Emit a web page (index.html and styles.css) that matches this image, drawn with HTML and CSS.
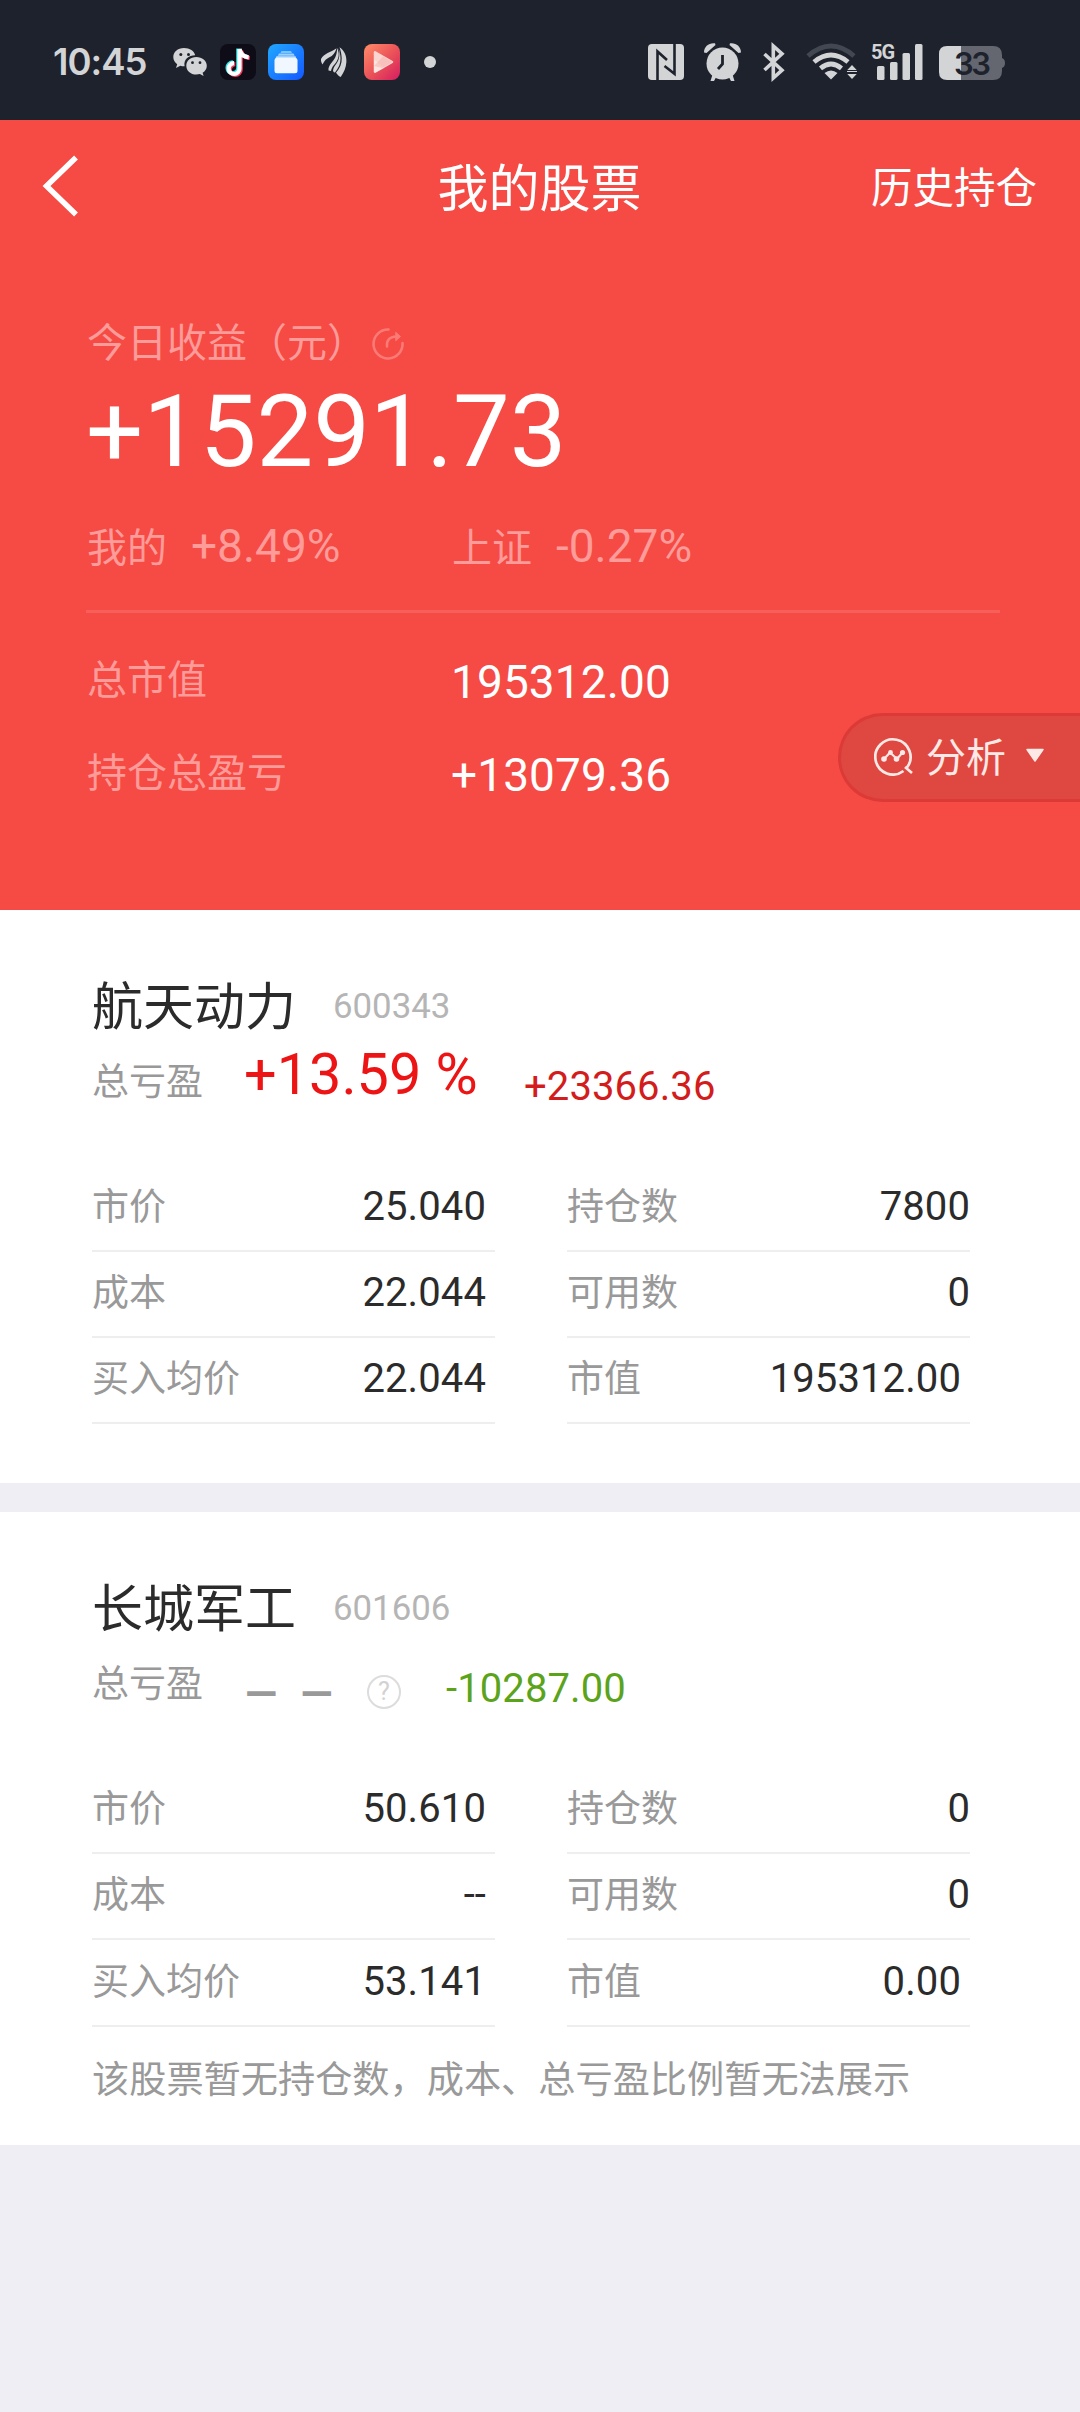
FILE: index.html
```html
<!DOCTYPE html>
<html lang="zh-CN">
<head>
<meta charset="utf-8">
<title>我的股票</title>
<link rel="stylesheet" href="styles.css">
</head>
<body>
<div class="status">
  <span class="clock">10:45</span>
  <div class="status-left">
    <svg class="wechat" width="36" height="36" viewBox="0 0 36 36"><g fill="#d3d4d6"><path d="M12 4C5.500 4 1.300 8 1.300 13.100c0 3 1.500 5.400 3.900 7.100L4 24l4.400-2.200c1.400.4 2.700.6 4.200.5C11.300 15.500 16.500 11.300 23.200 11.300 22.200 7 17.800 4 12 4z"/><path d="M24.300 13c-5.800 0-10 3.700-10 8.700s4.200 8.800 10 8.800c1.300 0 2.500-.2 3.600-.5L31.600 32l-1-3.200c2.600-1.600 4.200-4 4.200-7.100 0-5-4.700-8.700-10.500-8.700z"/></g><g fill="#1e222d"><circle cx="8.800" cy="10.500" r="1.500"/><circle cx="16.500" cy="10.500" r="1.500"/><circle cx="20.500" cy="18.700" r="1.400"/><circle cx="28" cy="18.700" r="1.400"/></g></svg>
    <svg width="36" height="36" viewBox="0 0 36 36"><rect width="36" height="36" rx="8" fill="#0d0c17"/><g fill="none" stroke-width="4.200"><path stroke="#25e6e4" d="M18.300 4.500v19.200a5.400 5.400 0 1 1-5.400-5.300M18.300 5c.8 4.800 4.300 7.300 8.800 7.700"/><path stroke="#f8385c" d="M20.700 6.500v19a5.400 5.400 0 1 1-5.400-5.300M21 6.600c1 4.600 4.300 7 8.800 7.400"/><path stroke="#fff" d="M19.500 5v19.500a5.400 5.400 0 1 1-5.400-5.300M19.500 5c1 5.300 4.600 7.900 9.200 8.300"/></g></svg>
    <svg width="36" height="36" viewBox="0 0 36 36"><defs><linearGradient id="bl" x1="0" y1="0" x2="1" y2="1"><stop stop-color="#20a8ff"/><stop offset="1" stop-color="#1458ff"/></linearGradient></defs><rect width="36" height="36" rx="8" fill="url(#bl)"/><path fill="#7cc3ff" d="M13.500 7h9.500l1 2H12.500z"/><path fill="#9dd1ff" d="M11 9.600h14.500l1.200 2.200H9.700z"/><path fill="#c2e2ff" d="M8.500 12.300h19l1.200 3H7z"/><rect x="6.500" y="14" width="23" height="15.200" rx="2.500" fill="#f1f7ff"/></svg>
    <svg width="36" height="36" viewBox="0 0 36 36"><g fill="#d3d4d6"><path d="M5 15C8 9 14.500 8.500 20.500 4.200c-1 4.300-3.500 7.600-7.500 9.300-3 1.300-4.500 3.400-6.500 6.900C5.300 18.700 4.800 17 5 15z"/><path d="M12.500 26.500c-.5-2.500 1-5.500 3.600-8.500 3.500-4 5-8 4.900-14 2.500 4.500 2.200 9.500-.5 13.700-2.300 3.600-4.300 4.300-5.500 9.300z"/><path d="M23.500 3.300C28.300 6.500 30.800 12 30.400 18c-.4 5.500-2.200 10-5.700 15-2.200-.8-3.200-2.800-4.700-4.300 4-4.700 6-9.200 5.700-14.700-.2-4-1-7.500-2.200-10.700z"/><path d="M22.300 4c1.700 5.500 1.500 11-1.800 15.500-1.700 2.300-3.500 4.500-3.500 7.500.6 1 1.300 1.500 2 1.500 3.700-4.500 5.600-9 5.500-14-.1-4-.9-7.500-2.200-10.500z"/></g></svg>
    <svg width="36" height="36" viewBox="0 0 36 36"><defs><linearGradient id="rd" x1="0" y1="0" x2="1" y2="1"><stop stop-color="#ff8d68"/><stop offset=".55" stop-color="#e94f58"/><stop offset="1" stop-color="#d51c61"/></linearGradient></defs><rect width="36" height="36" rx="8" fill="url(#rd)"/><path d="M11 8.300 28 18 11 27.700z" fill="#fbd6d0" stroke="#fbd6d0" stroke-width="2.500" stroke-linejoin="round"/><path d="M10 15.500 20 24 11 28.800l-1-1z" fill="#fff" opacity=".35"/><path d="M10 22 19 12.500l9.500 5.500L18 24z" fill="#f5a29d" opacity=".4"/></svg>
    <svg class="dot" width="12" height="12"><circle cx="6" cy="6" r="6" fill="#d3d4d6"/></svg>
  </div>
  <svg class="status-right" width="360" height="60" viewBox="646 32 360 60">
    <rect x="648" y="44" width="36" height="36" rx="4" fill="#d3d4d6"/><path d="M657.500 80V51.500L667 60M674.500 44v29.800L664.500 66" fill="none" stroke="#1e222d" stroke-width="2.600"/>
    <g fill="#d3d4d6"><circle cx="722.500" cy="63.500" r="16"/><path d="M704 52.500c0-6 5-10 11-9.200l.5 1.700-9 8zM741 52.500c0-6-5-10-11-9.200l-.5 1.700 9 8z"/><path d="m713 73 4 2.500-3 5.500h-3.500zM732 73l-4 2.500 3 5.500h3.500z"/></g><path d="M722.500 55v9l-4.500 5" fill="none" stroke="#1e222d" stroke-width="2.800"/>
    <path d="m764.500 54 17.500 16.200-8.700 7.800V46l8.700 7.800L764.500 70" fill="none" stroke="#d3d4d6" stroke-width="3.600"/>
    <g fill="none" stroke="#d3d4d6" stroke-width="4.800"><path d="M808 56q23-20 46 0" stroke="#434751"/><path d="M814 62q17-14 34 0M820.500 68.300q10.500-8.500 21 0"/></g><path fill="#d3d4d6" d="M831 79.500 824.500 73q6.500-5 13 0zM847.300 70l4.700-5 4.700 5zM847.300 74l4.700 5 4.700-5z"/><path d="M847 71.500h10" stroke="#d3d4d6" stroke-width="1"/>
    <g fill="#d3d4d6"><rect x="877" y="66" width="7.500" height="14" rx="1.500"/><rect x="890" y="62" width="7.500" height="18" rx="1.500"/><rect x="902.500" y="53" width="7.500" height="27" rx="1.500"/><rect x="915" y="44" width="7.500" height="36" rx="1.500"/><text class="net" x="871" y="58.500">5G</text></g>
    <path d="M961 46h32q9 0 9 9v3q3 1 3 5t-3 5v3q0 9-9 9h-32z" fill="#646770"/><path d="M961 46h-14q-8 0-8 8v18q0 8 8 8h14z" fill="#d3d4d6"/><text class="batt" x="954" y="74.500">33</text>
  </svg>
</div>

<header class="hero">
  <nav class="nav">
    <svg class="back" width="38" height="62" viewBox="0 0 38 62"><path d="M36 2.500 6.500 31 36 59.500" fill="none" stroke="#fff" stroke-width="5.500"/></svg>
    <h1 class="title">我的股票</h1>
    <span class="history">历史持仓</span>
  </nav>
  <div class="today"><span>今日收益（元）</span>
    <svg class="share" width="34" height="34" viewBox="0 0 34 34" fill="none" stroke="#fb7a76" stroke-width="2.600" stroke-linecap="round"><path d="M17.500 2.500A14.500 14.500 0 1 0 31.500 16"/><path d="M16 19.500c-.5-6 2-9.500 9.500-10"/><path d="m25 5.500 4.500 4-4.500 4z" fill="#fb7a76" stroke-width="1"/></svg>
  </div>
  <div class="gain num">+15291.73</div>
  <div class="compare">
    <div class="pair"><span>我的</span><span class="num rate">+8.49%</span></div>
    <div class="pair"><span>上证</span><span class="num rate">-0.27%</span></div>
  </div>
  <div class="rule"></div>
  <div class="total"><span class="total-label">总市值</span><span class="num total-value">195312.00</span></div>
  <div class="total"><span class="total-label">持仓总盈亏</span><span class="num total-value">+13079.36</span></div>
  <div class="analyse">
    <svg class="chart" width="40" height="40" viewBox="0 0 40 40" fill="none" stroke="#ffe9e7" stroke-width="2.700"><path d="M33 31.500A17.600 17.600 0 1 0 29.500 35M31 31l7 6"/><path d="m10 23 6-6.500 7 6.500 5.500-6.500" stroke-width="2.200"/><g fill="#ffe9e7" stroke="none"><circle cx="10" cy="23" r="2.800"/><circle cx="16.500" cy="16.500" r="2.400"/><circle cx="22.500" cy="23" r="2.800"/><circle cx="28.500" cy="16.500" r="2.600"/></g></svg>
    <span>分析</span>
    <svg class="caret" width="20" height="15" viewBox="0 0 20 15"><path d="M2 1.500h16L10 13z" fill="#ffe9e7" stroke="#ffe9e7" stroke-width="1.500" stroke-linejoin="round"/></svg>
  </div>
</header>

<section class="card">
  <div class="name-row"><h2 class="name">航天动力</h2><span class="num code">600343</span></div>
  <div class="profit"><span class="profit-label">总亏盈</span><span class="num pct">+13.59 %</span><span class="num amount up">+23366.36</span></div>
  <div class="grid">
    <div class="cell"><span>市价</span><b class="num inset">25.040</b></div>
    <div class="cell"><span>持仓数</span><b class="num">7800</b></div>
    <div class="cell"><span>成本</span><b class="num inset">22.044</b></div>
    <div class="cell"><span>可用数</span><b class="num">0</b></div>
    <div class="cell"><span>买入均价</span><b class="num inset">22.044</b></div>
    <div class="cell"><span>市值</span><b class="num inset">195312.00</b></div>
  </div>
</section>

<section class="card card-empty">
  <div class="name-row"><h2 class="name">长城军工</h2><span class="num code">601606</span></div>
  <div class="profit"><span class="profit-label">总亏盈</span><span class="num dashes">— —</span><span class="help">?</span><span class="num amount down">-10287.00</span></div>
  <div class="grid">
    <div class="cell"><span>市价</span><b class="num inset">50.610</b></div>
    <div class="cell"><span>持仓数</span><b class="num">0</b></div>
    <div class="cell"><span>成本</span><b class="num inset">--</b></div>
    <div class="cell"><span>可用数</span><b class="num">0</b></div>
    <div class="cell"><span>买入均价</span><b class="num inset">53.141</b></div>
    <div class="cell"><span>市值</span><b class="num inset">0.00</b></div>
  </div>
  <p class="note">该股票暂无持仓数，成本、总亏盈比例暂无法展示</p>
</section>
</body>
</html>
```

FILE: styles.css
```css
* { box-sizing: border-box; margin: 0; }
body {
  width: 1080px;
  min-height: 2412px;
  background: #efeef4;
  font-family: "Noto Sans CJK SC", sans-serif;
  font-weight: 400;
  white-space: nowrap;
}
svg { display: block; flex: none; }
.num { font-family: Roboto, sans-serif; font-weight: 400; }

.status {
  height: 120px;
  display: flex;
  align-items: center;
  padding: 4px 74px 0 53px;
  background: #1e222d;
}
.clock {
  width: 119px;
  color: #d3d4d6;
  font: 600 36.500px/40px Inter, sans-serif;
  letter-spacing: -1px;
}
.status-left { display: flex; align-items: center; gap: 12px; }
.dot { margin-left: 12px; }
.status-right { margin-left: auto; }
.net { font: 700 20px "Roboto", sans-serif; letter-spacing: -1px; }
.batt { font: 600 31px Inter, sans-serif; letter-spacing: -2.500px; fill: #1e222d; }

.hero {
  position: relative;
  height: 790px;
  background: #f64a44;
  color: #ff9b98;
  font-size: 40px;
  line-height: 40px;
}
.nav {
  height: 132px;
  display: grid;
  grid-template-columns: 1fr auto 1fr;
  align-items: center;
  padding: 0 43px 4px 40px;
  color: #fff;
}
.back { margin-top: 3px; }
.title { padding: 1px 0 0 2px; font-size: 51px; line-height: 60px; font-weight: 400; }
.history { justify-self: end; padding-top: 1px; font-size: 41.500px; line-height: 50px; }
.today { display: flex; align-items: center; gap: 4px; margin: 68px 0 0 87px; height: 40px; }
.share { margin-top: 7px; }
.gain { margin: 12px 0 0 86px; color: #fff; font-size: 101px; line-height: 120px; letter-spacing: -.1px; }
.compare { display: flex; height: 42px; margin: 32px 0 0 87px; }
.pair { display: flex; align-items: center; width: 365px; gap: 24px; }
.rate { font-size: 46px; padding-top: 1px; }
.rule { height: 3px; margin: 44px 80px 0 86px; background: #f95f5a; }
.total { display: flex; align-items: center; height: 46px; margin: 44px 0 0 87px; }
.total + .total { margin-top: 47px; }
.total-label { width: 364px; padding-bottom: 6px; }
.total-value { padding-top: 4px; color: #fff; font-size: 46px; letter-spacing: .1px; }
.analyse {
  position: absolute;
  right: 0;
  top: 593px;
  width: 242px;
  height: 89px;
  display: flex;
  align-items: center;
  padding-left: 33px;
  border: 3px solid #dc3a37;
  border-right: 0;
  border-radius: 45px 0 0 45px;
  background: #de4840;
  color: #ffe9e7;
}
.analyse span { margin: -6px 19px 0 12px; }
.chart { margin-top: -3px; }
.caret { margin-top: -4px; }

.card {
  height: 573px;
  padding: 62px 110px 0 92px;
  background: #fff;
  color: #999;
  font-size: 37px;
  line-height: 44px;
}
.card-empty { height: 633px; margin-top: 29px; }
.name-row { display: flex; align-items: center; height: 60px; }
.name { width: 241px; padding-top: 1px; color: #2b2b2b; font-size: 51px; line-height: 60px; font-weight: 400; }
.code { padding-top: 8px; color: #b5b5b5; font-size: 34.800px; }
.profit { display: flex; align-items: center; height: 60px; margin-top: 16px; }
.profit-label { width: 152px; padding-top: 1px; }
.pct { width: 280px; padding-bottom: 6px; color: #ec1414; font-size: 57.600px; }
.amount { padding-top: 17px; font-size: 40px; letter-spacing: .1px; }
.up { color: #d31c1c; }
.down { margin-left: 45px; color: #5ca31c; }
.dashes { width: 123px; padding: 29px 0 0 1px; font-size: 42px; font-weight: 700; word-spacing: 13px; }
.help {
  width: 34px;
  height: 34px;
  margin: 24px 0 0;
  border: 2px solid #dcdcdc;
  border-radius: 50%;
  color: #d2d2d2;
  font: 25px/30px Roboto, sans-serif;
  text-align: center;
}
.grid { display: grid; grid-template-columns: 403px 403px; column-gap: 72px; margin-top: 58px; }
.cell {
  display: flex;
  align-items: center;
  justify-content: space-between;
  height: 86px;
  padding: 0 0 8px;
  border-bottom: 2px solid #eee;
}
.card-empty .cell:nth-child(n+5) { height: 87px; }
.cell .num { padding-top: 6px; color: #2b2b2b; font-size: 40px; letter-spacing: .1px; }
.cell .inset { padding-right: 9px; }
.note { margin-top: 28px; font-size: 37.200px; }
```
